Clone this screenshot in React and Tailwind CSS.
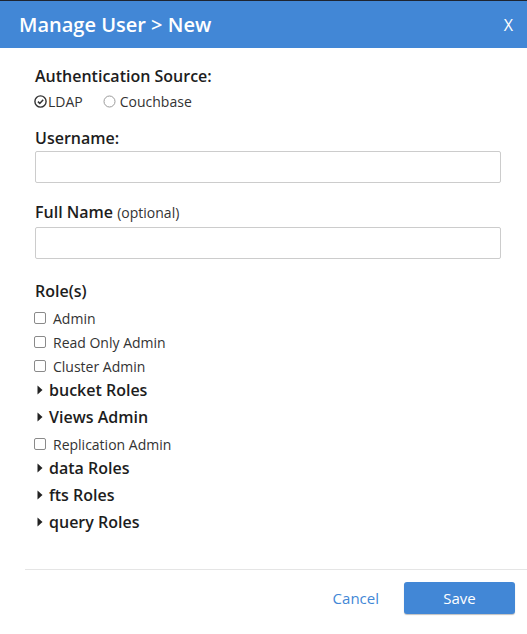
import React from "react";

function Tri() {
  return (
    <svg width="6" height="10" viewBox="0 0 6 10" className="mr-[6px] shrink-0">
      <path d="M0.5 0.5 L5.5 5 L0.5 9.5 Z" fill="#222" />
    </svg>
  );
}

function CheckRow({ label }) {
  return (
    <div className="flex items-center h-[24px]">
      <span className="w-[12px] h-[12px] rounded-[2px] border border-[#8a8a8a] bg-white shrink-0 ml-[-1px]" />
      <span className="ml-[7px] text-[14px] text-[#333]">{label}</span>
    </div>
  );
}

function ExpandRow({ label }) {
  return (
    <div className="flex items-center h-[24px] mb-[3px] pl-[2px]">
      <Tri />
      <span className="text-[16px] font-semibold text-[#1d1d1d]">{label}</span>
    </div>
  );
}

export default function App() {
  return (
    <div
      className="w-[527px] h-[634px] bg-white flex flex-col overflow-hidden"
      style={{ fontFamily: '"Open Sans", "Noto Sans", sans-serif' }}
    >
      <div className="h-[1px] bg-[#1e2430]" />
      <div className="h-[47px] bg-[#4287d6] flex items-center justify-between pl-[19px] pr-[14px]">
        <span className="text-white text-[20px] font-semibold leading-none">Manage User &gt; New</span>
        <span className="text-white text-[16px] leading-none">X</span>
      </div>

      <div className="px-[35px] pt-[17px] flex flex-col">
        <div className="text-[16px] leading-[22px] font-semibold text-[#1d1d1d]">Authentication Source:</div>
        <div className="mt-[5px] flex items-center h-[18px] text-[14px] text-[#333]">
          <svg width="13" height="13" viewBox="0 0 13 13" className="ml-[-1px] shrink-0">
            <circle cx="6.5" cy="6.5" r="5.6" fill="none" stroke="#333" strokeWidth="1.4" />
            <path d="M3.9 6.6 L5.8 8.4 L9.2 4.8" fill="none" stroke="#333" strokeWidth="1.5" />
          </svg>
          <span className="ml-[1px]">LDAP</span>
          <svg width="13" height="13" viewBox="0 0 13 13" className="ml-[20px] shrink-0">
            <circle cx="6.5" cy="6.5" r="5.5" fill="white" stroke="#9a9a9a" strokeWidth="1" />
          </svg>
          <span className="ml-[4px]">Couchbase</span>
        </div>

        <div className="mt-[17px] text-[16px] leading-[22px] font-semibold text-[#1d1d1d]">Username:</div>
        <div className="mt-[2px] h-[32px] border border-[#cccccc] rounded-[2px] w-[466px]" />

        <div className="mt-[18px] text-[16px] leading-[22px] font-semibold text-[#1d1d1d]">
          Full Name <span className="text-[14px] font-normal text-[#333]">(optional)</span>
        </div>
        <div className="mt-[3px] h-[32px] border border-[#cccccc] rounded-[2px] w-[466px]" />

        <div className="mt-[21px] text-[16px] leading-[22px] font-semibold text-[#1d1d1d]">Role(s)</div>
        <div className="mt-[4px] flex flex-col">
          <CheckRow label="Admin" />
          <CheckRow label="Read Only Admin" />
          <CheckRow label="Cluster Admin" />
          <ExpandRow label="bucket Roles" />
          <ExpandRow label="Views Admin" />
          <CheckRow label="Replication Admin" />
          <ExpandRow label="data Roles" />
          <ExpandRow label="fts Roles" />
          <ExpandRow label="query Roles" />
        </div>
      </div>

      <div className="mt-[32px] ml-[25px] border-t border-[#e5e5e5] flex items-center justify-end pt-[12px] pr-[12px]">
        <span className="text-[15px] text-[#4287d6] mr-[25px]">Cancel</span>
        <div className="w-[111px] h-[32px] rounded-[3px] bg-[#4287d6] flex items-center justify-center text-white text-[15px] shadow-[0_1px_1px_rgba(0,0,0,0.25)]">
          Save
        </div>
      </div>
    </div>
  );
}
